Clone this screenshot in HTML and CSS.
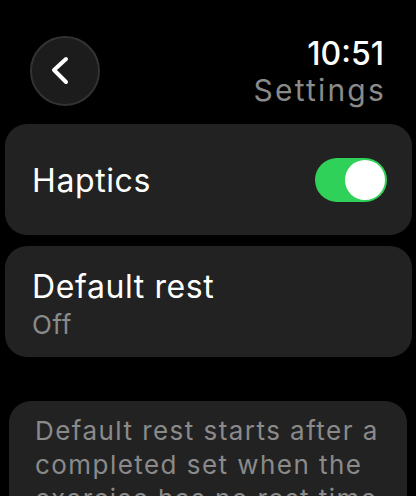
FILE: index.html
```html
<!DOCTYPE html>
<html lang="en">
<head>
    <meta charset="UTF-8">
    <meta name="viewport" content="width=device-width, initial-scale=1.0">
    <title>Settings</title>
    <link rel="stylesheet" href="styles.css">
</head>
<body>
    <div class="screen">
        <div class="header">
            <button type="button" class="backBtn">
                <svg width="24" height="32" viewBox="0 0 24 32">
                    <path d="M16 4 L4 15 L16 27" fill="none" stroke="#fff" stroke-width="4" stroke-linecap="round" stroke-linejoin="round"/>
                </svg>
            </button>
            <div class="titleBox">
                <div class="time">10:51</div>
                <div class="pageTitle">Settings</div>
            </div>
        </div>
        <div class="row toggleRow">
            <span class="label">Haptics</span>
            <span class="toggle"><span class="knob"></span></span>
        </div>
        <div class="row stackRow">
            <span class="label">Default rest</span>
            <span class="value">Off</span>
        </div>
        <p class="note">Default rest starts after a completed set when the exercise has no rest time.</p>
    </div>
</body>
</html>
```

FILE: styles.css
```css
body{
    margin: 0;
    background-color: #000;
    font-family: "Inter", "Noto Sans", sans-serif;
    color: #fff;
    overflow: hidden;
}
.screen{
    width: 416px;
    height: 496px;
    overflow: hidden;
}
.header{
    display: flex;
    justify-content: space-between;
    align-items: flex-start;
    padding-top: 36px;
    padding-left: 30px;
    padding-right: 32px;
    height: 88px;
}
.backBtn{
    width: 70px;
    height: 70px;
    border-radius: 50%;
    background-color: #1c1c1c;
    border: 2px solid #333;
    display: flex;
    align-items: center;
    justify-content: center;
    padding: 0;
    padding-right: 6px;
}
.titleBox{
    text-align: right;
}
.time{
    font-size: 32px;
    font-weight: 500;
    line-height: 34px;
    margin-top: 1px;
}
.pageTitle{
    font-size: 30px;
    color: #8a8a8a;
    line-height: 38px;
    letter-spacing: 2.2px;
    margin-right: -2px;
}
.row{
    background-color: #222;
    border-radius: 22px;
    margin: 0 4px 11px 5px;
    height: 111px;
    box-sizing: border-box;
    padding-left: 27px;
}
.toggleRow{
    display: flex;
    align-items: center;
    justify-content: space-between;
    padding-right: 25px;
    padding-top: 3px;
}
.label{
    font-size: 32px;
    letter-spacing: 0.6px;
}
.toggle{
    width: 72px;
    height: 44px;
    border-radius: 22px;
    background-color: #30d158;
    display: flex;
    align-items: center;
    justify-content: flex-end;
    padding-right: 2px;
    box-sizing: border-box;
    margin-top: -3px;
}
.knob{
    width: 40px;
    height: 40px;
    border-radius: 50%;
    background-color: #fff;
}
.stackRow{
    display: flex;
    flex-direction: column;
    justify-content: center;
    padding-top: 8px;
}
.label, .value{
    line-height: 38px;
}
.value{
    font-size: 26px;
    color: #8a8a8a;
    letter-spacing: 0.6px;
}
.note{
    margin: 44px 9px 0 9px;
    background-color: #222;
    border-radius: 22px;
    padding: 13px 10px 20px 26px;
    font-size: 26px;
    line-height: 34px;
    color: #8a8a8a;
    letter-spacing: 1.45px;
}
```
